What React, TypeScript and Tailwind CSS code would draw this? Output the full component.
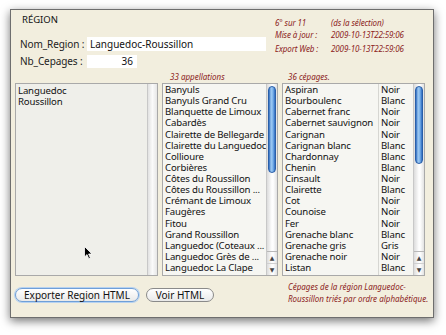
import React from "react";

const appellations = [
  "Banyuls",
  "Banyuls Grand Cru",
  "Blanquette de Limoux",
  "Cabardès",
  "Clairette de Bellegarde",
  "Clairette du Languedoc",
  "Collioure",
  "Corbières",
  "Côtes du Roussillon",
  "Côtes du Roussillon ...",
  "Crémant de Limoux",
  "Faugères",
  "Fitou",
  "Grand Roussillon",
  "Languedoc (Coteaux ...",
  "Languedoc Grès de ...",
  "Languedoc La Clape",
  "Languedoc Picpoul ...",
];

const cepages: [string, string][] = [
  ["Aspiran", "Noir"],
  ["Bourboulenc", "Blanc"],
  ["Cabernet franc", "Noir"],
  ["Cabernet sauvignon", "Noir"],
  ["Carignan", "Noir"],
  ["Carignan blanc", "Blanc"],
  ["Chardonnay", "Blanc"],
  ["Chenin", "Blanc"],
  ["Cinsault", "Noir"],
  ["Clairette", "Blanc"],
  ["Cot", "Noir"],
  ["Counoise", "Noir"],
  ["Fer", "Noir"],
  ["Grenache blanc", "Blanc"],
  ["Grenache gris", "Gris"],
  ["Grenache noir", "Noir"],
  ["Listan", "Blanc"],
  ["Macabeu", "Blanc"],
];

function Arrows() {
  return (
    <div className="flex flex-col">
      <div className="h-[12px] border-t border-[#b8b8b8] flex items-center justify-center text-[6px] leading-none text-[#444]">▲</div>
      <div className="h-[12px] border-t border-[#d0d0d0] flex items-center justify-center text-[6px] leading-none text-[#444]">▼</div>
    </div>
  );
}

function Track({ children }: { children?: React.ReactNode }) {
  return <div className="flex-1 pt-[2px] flex justify-center">{children}</div>;
}

function Thumb({ className }: { className: string }) {
  return (
    <div
      className={
        "w-[8px] rounded-full border border-[#2a5fa8] bg-[linear-gradient(to_right,#2d6bc0,#9fcaf2_35%,#7db4ec_65%,#2f6cc0)] " +
        className
      }
    />
  );
}

export default function App() {
  return (
    <div className="w-[446px] h-[335px] bg-white font-['Noto_Sans','DejaVu_Sans',sans-serif] text-[#111] relative overflow-hidden">
      <div className="ml-[10px] mt-[9px] w-[424px] h-[309px] bg-[#f2eede] border border-[#6e6e6e] shadow-[0_3px_9px_rgba(0,0,0,0.55)] flex flex-col">
        {/* header */}
        <div className="flex h-[60px]">
          <div className="w-[262px] flex flex-col">
            <div className="pl-[11px] pt-[4px] h-[27px] text-[9.5px] leading-[12px]">RÉGION</div>
            <div className="flex items-center h-[14px] pl-[9px]">
              <div className="w-[67px] text-[10px] text-[#222] tracking-[-0.1px]">Nom_Region :</div>
              <div className="w-[179px] h-[14px] bg-white text-[10px] leading-[14px] pl-[3px]">Languedoc-Roussillon</div>
            </div>
            <div className="flex items-center h-[13px] mt-[4px] pl-[9px]">
              <div className="w-[67px] text-[10px] text-[#222] tracking-[-0.1px]">Nb_Cepages :</div>
              <div className="w-[50px] h-[13px] bg-white text-[10px] leading-[13px] text-right pr-[4px]">36</div>
            </div>
          </div>
          <div className="flex flex-col pt-[7px] pl-[2px] text-[8px] italic text-[#8c1c1c] tracking-[-0.1px]">
            <div className="flex h-[12px] items-center">
              <div className="w-[56px]">6° sur 11</div>
              <div>(ds la sélection)</div>
            </div>
            <div className="flex h-[12px] items-center">
              <div className="w-[56px]">Mise à jour :</div>
              <div>2009-10-13T22:59:06</div>
            </div>
            <div className="flex h-[12px] items-center mt-[2px]">
              <div className="w-[56px]">Export Web :</div>
              <div>2009-10-13T22:59:06</div>
            </div>
          </div>
        </div>

        {/* list labels */}
        <div className="flex h-[13px] items-center text-[8px] italic text-[#8c1c1c]">
          <div className="pl-[159px] w-[277px]">33 appellations</div>
          <div>36 cépages.</div>
        </div>

        {/* lists */}
        <div className="flex h-[193px] pl-[4px] text-[9.6px] tracking-[-0.15px] leading-[11.125px]">
          <div className="w-[143px] flex border border-[#a9a9a9] bg-[#efefea]">
            <div className="flex-1 pl-[2px] pt-[1px]">
              <div>Languedoc</div>
              <div>Roussillon</div>
            </div>
            <div className="w-[10px] border-l border-[#c8c8c8] bg-[linear-gradient(to_right,#e2e2e2,#fafafa_50%,#e6e6e6)]" />
          </div>

          <div className="ml-[4px] w-[116px] flex border border-[#a9a9a9] bg-[#f6f6f2] overflow-hidden">
            <div className="flex-1 pl-[2px] overflow-hidden whitespace-nowrap">
              {appellations.map((a) => (
                <div key={a} className="h-[11.125px]">{a}</div>
              ))}
            </div>
            <div className="w-[11px] flex flex-col border-l border-[#c8c8c8] bg-[linear-gradient(to_right,#dcdcdc,#fbfbfb_45%,#ffffff_60%,#e2e2e2)]">
              <Track>
                <Thumb className="h-[87px]" />
              </Track>
              <Arrows />
            </div>
          </div>

          <div className="ml-[4px] w-[143px] flex border border-[#a9a9a9] bg-[#f6f6f2] overflow-hidden">
            <div className="w-[96px] pl-[2px] overflow-hidden whitespace-nowrap border-r border-[#d6d6d2]">
              {cepages.map(([n]) => (
                <div key={n} className="h-[11.125px]">{n}</div>
              ))}
            </div>
            <div className="flex-1 pl-[2px] overflow-hidden whitespace-nowrap">
              {cepages.map(([n, c]) => (
                <div key={n} className="h-[11.125px]">{c}</div>
              ))}
            </div>
            <div className="w-[11px] flex flex-col border-l border-[#c8c8c8] bg-[linear-gradient(to_right,#dcdcdc,#fbfbfb_45%,#ffffff_60%,#e2e2e2)]">
              <Track>
                <Thumb className="h-[78px]" />
              </Track>
              <Arrows />
            </div>
          </div>
        </div>

        {/* bottom */}
        <div className="flex pl-[4px] pt-[3px]">
          <div className="flex items-start pt-[9px] gap-[7px]">
            <div className="h-[14px] w-[124px] rounded-full border-[1.5px] border-[#6f9fd8] bg-[linear-gradient(to_bottom,#ffffff,#e9e9e9)] shadow-[0_0_0_1px_#b7d2f0] flex items-center justify-center text-[10px] leading-none">
              Exporter Region HTML
            </div>
            <div className="h-[14px] w-[68px] rounded-full border border-[#8a8a8a] bg-[linear-gradient(to_bottom,#ffffff,#e9e9e9)] flex items-center justify-center text-[10px] leading-none">
              Voir HTML
            </div>
          </div>
          <div className="ml-[74px] pt-[2px] text-[8px] italic leading-[12px] text-[#8c1c1c] whitespace-nowrap">
            <div>Cépages de la région Languedoc-</div>
            <div>Roussillon triés par ordre alphabétique.</div>
          </div>
        </div>
      </div>

      {/* mouse cursor */}
      <svg className="absolute left-[84px] top-[246px]" width="9" height="14" viewBox="0 0 9 14">
        <path d="M0.5 0.5 L0.5 11 L3 8.6 L4.8 12.8 L6.4 12.1 L4.6 8 L8 8 Z" fill="#000" stroke="#fff" strokeWidth="0.8" />
      </svg>
    </div>
  );
}
